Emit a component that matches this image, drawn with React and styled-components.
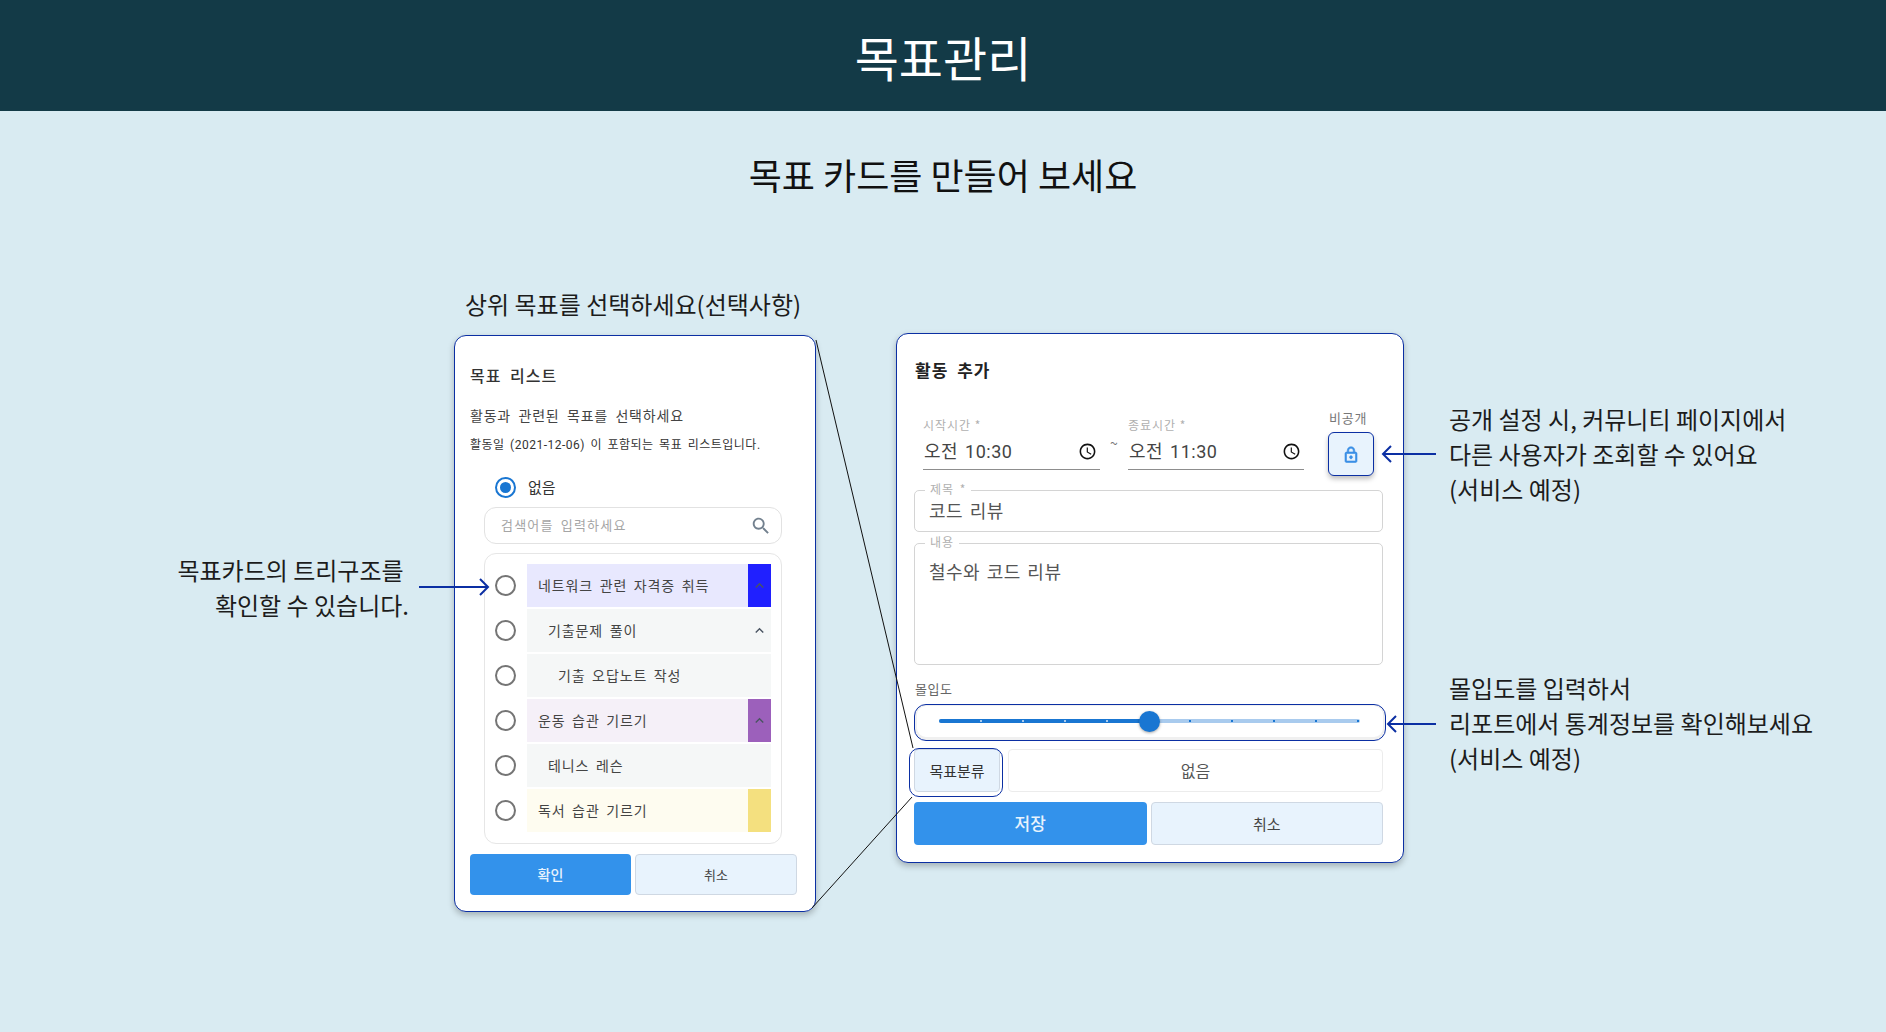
import React from 'react'
import styled, { createGlobalStyle } from 'styled-components'

const navy = '#0b2fa3'

const GlobalStyle = createGlobalStyle`
 html, body {
  margin: 0;
  padding: 0;
  background: #d9ebf2;
 }
 * {
  box-sizing: border-box;
 }
 body {
  font-family: "Noto Sans CJK KR", "Noto Sans", sans-serif;
 }
`

const Page = styled.div`
 position: relative;
 width: 1886px;
 height: 1032px;
 overflow: hidden;
 background: #d9ebf2;
 color: #1c1c1c;
`

const Header = styled.header`
 height: 111px;
 display: flex;
 align-items: center;
 justify-content: center;
 background: #133a47;
 color: #fff;
 font-size: 48px;
`

const Subtitle = styled.h2`
 margin: 38px 0 0;
 font-size: 36px;
 font-weight: 400;
 line-height: 50px;
 text-align: center;
 color: #111;
`

const Board = styled.div`
 display: flex;
 align-items: flex-start;
 margin-top: 91px;
`

const LeftNote = styled.div`
 width: 455px;
 margin-top: 262px;
 padding-right: 46px;
 font-size: 24px;
 line-height: 35px;
 text-align: right;
 white-space: pre;
`

const LeftColumn = styled.div`
 width: 362px;
 margin: 0 80px 0 -1px;
`

const ColumnLabel = styled.div`
 height: 30px;
 margin: -1px 0 16px 11px;
 font-size: 24px;
 line-height: 30px;
 white-space: nowrap;
`

const Card = styled.section`
 border: 1px solid ${navy};
 border-radius: 12px;
 background: #fff;
 box-shadow: 0 3px 6px rgba(0, 0, 0, 0.25);
`

const GoalCard = styled(Card)`
 padding: 26px 18px 16px 15px;
`

const ActivityCard = styled(Card)`
 width: 508px;
 margin-top: 43px;
 padding: 23px 20px 17px 17px;
`

const CardTitle = styled.h3`
 margin: 0 0 0 ${(p) => p.$indent}px;
 font-size: ${(p) => p.$size}px;
 font-weight: ${(p) => p.$weight};
 line-height: 26px;
 letter-spacing: 1px;
 word-spacing: 4px;
 color: ${(p) => p.$color};
`

const GoalLead = styled.p`
 margin: 14px 0 0;
 font-size: 14px;
 line-height: 26px;
 letter-spacing: 0.8px;
 word-spacing: 3.5px;
 color: #444;
 white-space: nowrap;
`

const GoalHint = styled.p`
 margin: 7px 0 0;
 font-family: Roboto, "Noto Sans CJK KR", sans-serif;
 font-size: 12px;
 line-height: 20px;
 letter-spacing: 0.5px;
 word-spacing: 2px;
 color: #333;
 white-space: nowrap;
`

const Radio = styled.span`
 flex: none;
 position: relative;
 width: 21px;
 height: 21px;
 border: 2px solid ${(p) => (p.$checked ? '#1976d2' : '#757575')};
 border-radius: 50%;
 &::after {
  content: '';
  display: ${(p) => (p.$checked ? 'block' : 'none')};
  position: absolute;
  inset: 3px;
  border-radius: 50%;
  background: #1976d2;
 }
`

const NoneRow = styled.div`
 display: flex;
 align-items: center;
 gap: 12px;
 height: 24px;
 margin: 20px 0 0 25px;
 font-size: 15px;
 color: #333;
`

const NoneText = styled.span`
 margin-bottom: 2px;
`

const SearchBox = styled.div`
 display: flex;
 align-items: center;
 justify-content: space-between;
 width: 298px;
 height: 37px;
 margin: 8px 0 0 14px;
 padding: 0 9px 0 16px;
 border: 1px solid #e2e2e2;
 border-radius: 12px;
 font-size: 13px;
 letter-spacing: 1.2px;
 word-spacing: 3px;
 color: #a5a5a5;
 svg {
  width: 22px;
  height: 22px;
  fill: #72808e;
 }
`

const SearchText = styled.span`
 margin-bottom: 2px;
`

const TreeBox = styled.div`
 display: flex;
 flex-direction: column;
 gap: 2px;
 width: 298px;
 height: 291px;
 margin: 9px 0 0 14px;
 padding: 10px 10px 0 10px;
 border: 1px solid #e6e6e6;
 border-radius: 12px;
`

const TreeLine = styled.div`
 display: flex;
 align-items: center;
 gap: 11px;
 height: 43px;
`

const TreeRow = styled.div`
 flex: 1;
 display: flex;
 align-items: center;
 justify-content: space-between;
 height: 100%;
 padding-left: ${(p) => 11 + p.$depth * 10}px;
 background: ${(p) => p.$bg};
 font-size: 14px;
 letter-spacing: 0.9px;
 word-spacing: 2.5px;
 color: #444;
`

const TreeLabel = styled.span`
 margin-bottom: 2px;
`

const TreeColor = styled.span`
 display: flex;
 align-items: center;
 justify-content: center;
 width: 23px;
 height: 100%;
 background: ${(p) => p.$color};
 svg {
  width: 17px;
  height: 17px;
  fill: #4a5462;
 }
`

const ButtonRow = styled.div`
 display: grid;
 grid-template-columns: ${(p) => p.$columns};
 gap: 4px;
 height: ${(p) => p.$height}px;
 margin-top: 10px;
`

const SolidButton = styled.button`
 padding: 0 0 2px;
 border: 0;
 border-radius: 4px;
 background: #3392eb;
 color: #e8f3fd;
 font-family: inherit;
 font-size: ${(p) => p.$size}px;
 font-weight: 500;
`

const PaleButton = styled.button`
 border: 1px solid #cfd8e3;
 border-radius: 4px;
 background: #e8f3fd;
 color: #444;
 font-family: inherit;
 font-size: ${(p) => p.$size}px;
`

const TimeRow = styled.div`
 display: flex;
 align-items: flex-start;
 height: 72px;
 margin-top: 27px;
`

const TimeField = styled.div`
 width: ${(p) => p.$width}px;
 margin: 7px 0 0 ${(p) => p.$left}px;
 border-bottom: 1px solid #8d8d8d;
 height: 53px;
`

const SmallLabel = styled.div`
 font-size: 12px;
 line-height: 16px;
 letter-spacing: 1px;
 color: #b0b0b0;
`

const TimeValue = styled.div`
 display: flex;
 align-items: center;
 justify-content: space-between;
 height: 30px;
 margin-top: 3px;
 padding: 0 3px 0 1px;
 font-family: Roboto, "Noto Sans CJK KR", sans-serif;
 font-size: 18px;
 letter-spacing: 0.5px;
 word-spacing: 2px;
 color: #444;
 svg {
  width: 19px;
  height: 19px;
  fill: #111;
 }
`

const TimeText = styled.span`
 margin-bottom: 2px;
`

const Tilde = styled.span`
 width: 28px;
 margin-top: 23px;
 font-size: 14px;
 line-height: 20px;
 text-align: center;
 color: #777;
`

const LockColumn = styled.div`
 margin-left: 24px;
`

const LockLabel = styled.div`
 margin-left: 1px;
 font-size: 13px;
 line-height: 16px;
 letter-spacing: 0.8px;
 color: #777;
`

const LockButton = styled.button`
 display: flex;
 align-items: center;
 justify-content: center;
 width: 46px;
 height: 44px;
 margin-top: 6px;
 padding: 0;
 border: 1px solid ${navy};
 border-radius: 6px;
 background: #e8f3fd;
 box-shadow: 0 3px 5px rgba(0, 0, 0, 0.25);
 svg {
  width: 18px;
  height: 18px;
  margin-top: 2px;
  fill: #3a8fe6;
  stroke: #3a8fe6;
  stroke-width: 0.8;
 }
`

const OutlineField = styled.div`
 position: relative;
 height: ${(p) => p.$height}px;
 margin-top: ${(p) => p.$top}px;
 padding: ${(p) => p.$pad}px 14px 0;
 border: 1px solid #d4d4d4;
 border-radius: 5px;
 font-size: 18px;
 line-height: 28px;
 letter-spacing: 0.5px;
 word-spacing: 2px;
 color: #555;
`

const FieldLegend = styled.span`
 position: absolute;
 top: -10px;
 left: 10px;
 padding: 0 5px;
 background: #fff;
 font-size: 12px;
 line-height: 16px;
 letter-spacing: 1px;
 color: #b0b0b0;
`

const GaugeLabel = styled.div`
 margin: 16px 0 0 1px;
 font-size: 13px;
 line-height: 16px;
 letter-spacing: 0.5px;
 color: #666;
`

const GaugeBox = styled.div`
 display: flex;
 align-items: center;
 height: 37px;
 margin: 7px -3px 0 0;
 padding: 0 25px 3px 24px;
 border: 1px solid ${navy};
 border-radius: 12px;
 box-shadow: inset 0 -1px 0 2px #f0f0f0;
`

const Track = styled.div`
 position: relative;
 flex: 1;
 display: flex;
 align-items: center;
 justify-content: space-between;
 height: 4px;
 padding: 0 1px 0 41px;
 border-radius: 2px;
 background: #a9cbee;
`

const TrackFill = styled.div`
 position: absolute;
 top: 0;
 bottom: 0;
 left: 0;
 border-radius: 2px;
 background: #1976d2;
`

const TrackMark = styled.span`
 position: relative;
 width: 2px;
 height: 2px;
 background: ${(p) => (p.$on ? '#a9cbee' : '#1976d2')};
`

const Thumb = styled.span`
 position: absolute;
 top: -8.5px;
 width: 21px;
 height: 21px;
 margin-left: -10.5px;
 border-radius: 50%;
 background: #1976d2;
 box-shadow: 0 1px 3px rgba(0, 0, 0, 0.35);
`

const CategoryRow = styled.div`
 display: grid;
 grid-template-columns: 86px 1fr;
 gap: 8px;
 height: 43px;
 margin-top: 8px;
`

const CategoryButton = styled(PaleButton)`
 position: relative;
 color: #333;
 &::after {
  content: '';
  position: absolute;
  inset: -2px -4px -6px -6px;
  border: 1px solid ${navy};
  border-radius: 10px;
 }
`

const CategoryValue = styled.div`
 display: flex;
 align-items: center;
 justify-content: center;
 padding-bottom: 2px;
 border: 1px solid #ececec;
 border-radius: 4px;
 font-size: 16px;
 color: #555;
`

const RightNotes = styled.div`
 margin-left: 45px;
`

const Note = styled.div`
 margin-top: ${(p) => p.$top}px;
 font-size: 24px;
 line-height: 35px;
 white-space: nowrap;
`

const Overlay = styled.svg`
 position: absolute;
 top: 0;
 left: 0;
 pointer-events: none;
`

const SearchIcon = () => (
  <svg viewBox="0 0 24 24"><path d="M15.5 14h-.79l-.28-.27C15.41 12.59 16 11.11 16 9.5 16 5.91 13.09 3 9.5 3S3 5.91 3 9.5 5.91 16 9.5 16c1.61 0 3.09-.59 4.23-1.57l.27.28v.79l5 4.99L20.49 19l-4.99-5zm-6 0C7.01 14 5 11.99 5 9.5S7.01 5 9.5 5 14 7.01 14 9.5 11.99 14 9.5 14z" /></svg>
)

const ClockIcon = () => (
  <svg viewBox="0 0 24 24"><path d="M11.99 2C6.47 2 2 6.48 2 12s4.47 10 9.99 10C17.52 22 22 17.52 22 12S17.52 2 11.99 2zM12 20c-4.42 0-8-3.58-8-8s3.58-8 8-8 8 3.58 8 8-3.58 8-8 8zm.5-13H11v6l5.25 3.15.75-1.23-4.5-2.67z" /></svg>
)

const LockIcon = () => (
  <svg viewBox="0 0 24 24"><path d="M18 8h-1V6c0-2.76-2.24-5-5-5S7 3.24 7 6v2H6c-1.1 0-2 .9-2 2v10c0 1.1.9 2 2 2h12c1.1 0 2-.9 2-2V10c0-1.1-.9-2-2-2zM9 6c0-1.66 1.34-3 3-3s3 1.34 3 3v2H9V6zm9 14H6V10h12v10zm-6-3c1.1 0 2-.9 2-2s-.9-2-2-2-2 .9-2 2 .9 2 2 2z" /></svg>
)

const ChevronIcon = () => (
  <svg viewBox="0 0 24 24"><path d="M12 8l-6 6 1.41 1.41L12 10.83l4.59 4.58L18 14z" /></svg>
)

const goals = [
  { label: '네트워크 관련 자격증 취득', depth: 0, bg: '#e8e8fe', color: '#2020ff', open: true },
  { label: '기출문제 풀이', depth: 1, bg: '#f5f7f7', color: 'transparent', open: true },
  { label: '기출 오답노트 작성', depth: 2, bg: '#f5f7f7' },
  { label: '운동 습관 기르기', depth: 0, bg: '#f5f0f8', color: '#9c60bb', open: true },
  { label: '테니스 레슨', depth: 1, bg: '#f5f7f7' },
  { label: '독서 습관 기르기', depth: 0, bg: '#fefcf0', color: '#f4e07f' },
]

const App = () => (
  <Page>
    <GlobalStyle />
    <Header>목표관리</Header>
    <Subtitle>목표 카드를 만들어 보세요</Subtitle>
    <Board>
      <LeftNote>
        {'목표카드의 트리구조를\u00a0\n확인할 수 있습니다.'}
      </LeftNote>
      <LeftColumn>
        <ColumnLabel>상위 목표를 선택하세요(선택사항)</ColumnLabel>
        <GoalCard>
          <CardTitle $size={16} $weight={500} $color="#333" $indent={0}>목표 리스트</CardTitle>
          <GoalLead>활동과 관련된 목표를 선택하세요</GoalLead>
          <GoalHint>활동일 (2021-12-06) 이 포함되는 목표 리스트입니다.</GoalHint>
          <NoneRow>
            <Radio $checked />
            <NoneText>없음</NoneText>
          </NoneRow>
          <SearchBox>
            <SearchText>검색어를 입력하세요</SearchText>
            <SearchIcon />
          </SearchBox>
          <TreeBox>
            {goals.map((goal) => (
              <TreeLine key={goal.label}>
                <Radio />
                <TreeRow $depth={goal.depth} $bg={goal.bg}>
                  <TreeLabel>{goal.label}</TreeLabel>
                  {goal.color && (
                    <TreeColor $color={goal.color}>
                      {goal.open && <ChevronIcon />}
                    </TreeColor>
                  )}
                </TreeRow>
              </TreeLine>
            ))}
          </TreeBox>
          <ButtonRow $columns="161px 162px" $height={41}>
            <SolidButton $size={14}>확인</SolidButton>
            <PaleButton $size={13}>취소</PaleButton>
          </ButtonRow>
        </GoalCard>
      </LeftColumn>
      <ActivityCard>
        <CardTitle $size={17} $weight={700} $color="#222" $indent={1}>활동 추가</CardTitle>
        <TimeRow>
          <TimeField $width={177} $left={9}>
            <SmallLabel>시작시간 *</SmallLabel>
            <TimeValue>
              <TimeText>오전 10:30</TimeText>
              <ClockIcon />
            </TimeValue>
          </TimeField>
          <Tilde>~</Tilde>
          <TimeField $width={176} $left={0}>
            <SmallLabel>종료시간 *</SmallLabel>
            <TimeValue>
              <TimeText>오전 11:30</TimeText>
              <ClockIcon />
            </TimeValue>
          </TimeField>
          <LockColumn>
            <LockLabel>비공개</LockLabel>
            <LockButton>
              <LockIcon />
            </LockButton>
          </LockColumn>
        </TimeRow>
        <OutlineField $height={42} $top={8} $pad={5}>
          <FieldLegend>제목 *</FieldLegend>
          코드 리뷰
        </OutlineField>
        <OutlineField $height={122} $top={11} $pad={13}>
          <FieldLegend>내용</FieldLegend>
          철수와 코드 리뷰
        </OutlineField>
        <GaugeLabel>몰입도</GaugeLabel>
        <GaugeBox>
          <Track>
            <TrackFill style={{ width: '50%' }} />
            {[0, 1, 2, 3, 4, 5, 6, 7, 8, 9].map((i) => (
              <TrackMark key={i} $on={i < 4} />
            ))}
            <Thumb style={{ left: '50%' }} />
          </Track>
        </GaugeBox>
        <CategoryRow>
          <CategoryButton $size={15}>목표분류</CategoryButton>
          <CategoryValue>없음</CategoryValue>
        </CategoryRow>
        <ButtonRow $columns="1fr 1fr" $height={43}>
          <SolidButton $size={17}>저장</SolidButton>
          <PaleButton $size={15}>취소</PaleButton>
        </ButtonRow>
      </ActivityCard>
      <RightNotes>
        <Note $top={111}>
          공개 설정 시, 커뮤니티 페이지에서
          <br />
          다른 사용자가 조회할 수 있어요
          <br />
          (서비스 예정)
        </Note>
        <Note $top={164}>
          몰입도를 입력하서
          <br />
          리포트에서 통계정보를 확인해보세요
          <br />
          (서비스 예정)
        </Note>
      </RightNotes>
    </Board>
    <Overlay width="1886" height="1032" fill="none">
      <path d="M816 340L913 748M812 908L912 797" stroke="#111" strokeWidth="1" />
      <g stroke={navy} strokeWidth="2">
        <path d="M419 587H487M480 579l8 8-8 8" />
        <path d="M1436 454H1384M1391 446l-8 8 8 8" />
        <path d="M1436 724H1389M1396 716l-8 8 8 8" />
      </g>
    </Overlay>
  </Page>
)

export default App
